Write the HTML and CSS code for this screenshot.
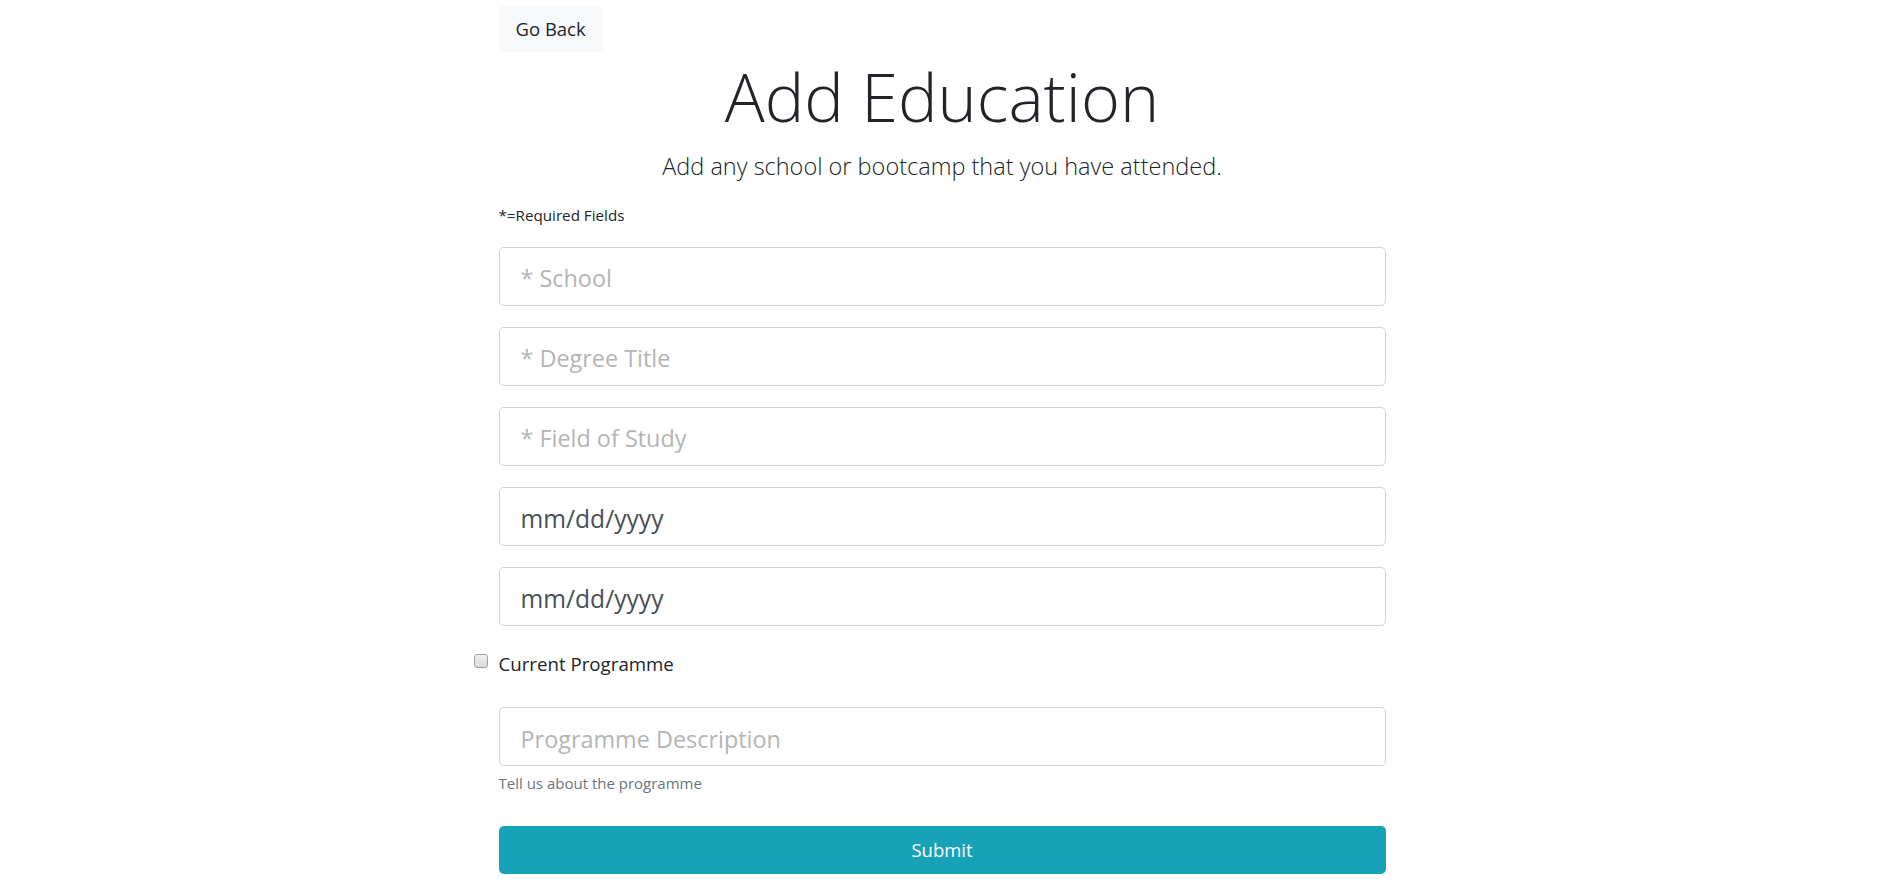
FILE: index.html
```html
<!DOCTYPE html>
<html lang="en">
<head>
<meta charset="utf-8">
<title>Add Education</title>
<link rel="stylesheet" href="styles.css">
</head>
<body>
<div class="container">
  <a class="btn-back" href="#">Go Back</a>
  <h1 class="title">Add Education</h1>
  <p class="lead">Add any school or bootcamp that you have attended.</p>
  <small class="required">*=Required Fields</small>
  <form class="form">
    <input class="field" type="text" placeholder="* School">
    <input class="field" type="text" placeholder="* Degree Title">
    <input class="field" type="text" placeholder="* Field of Study">
    <input class="field date" type="text" value="mm/dd/yyyy">
    <input class="field date" type="text" value="mm/dd/yyyy">
    <label class="check-row">
      <input class="check" type="checkbox">
      <span>Current Programme</span>
    </label>
    <input class="field desc" type="text" placeholder="Programme Description">
    <small class="help">Tell us about the programme</small>
    <button class="submit" type="button">Submit</button>
  </form>
</div>
</body>
</html>
```

FILE: styles.css
```css
* { box-sizing: border-box; }

body {
  margin: 0;
  background: #fff;
  color: #212529;
  font-family: "Open Sans", "Noto Sans", sans-serif;
  font-size: 18.5px;
  line-height: 1.5;
}

.container {
  width: 887px;
  margin: 0 auto;
  display: flex;
  flex-direction: column;
  align-items: stretch;
}

.btn-back {
  align-self: flex-start;
  margin-top: 6px;
  height: 46px;
  padding: 0 17px;
  display: flex;
  align-items: center;
  background: #f8f9fa;
  border-radius: 5px;
  color: #212529;
  text-decoration: none;
  font-size: 18.5px;
}

.title {
  margin: 3px 0 0;
  text-align: center;
  font-size: 66.5px;
  font-weight: 300;
  line-height: 82px;
  color: #212529;
}

.lead {
  margin: 12px 0 0;
  text-align: center;
  font-size: 23.5px;
  font-weight: 300;
  line-height: 34.5px;
}

.required {
  margin-top: 21px;
  font-size: 15.2px;
  line-height: 21px;
  color: #212529;
}

.form {
  margin-top: 21px;
  display: flex;
  flex-direction: column;
}

.field {
  height: 59px;
  margin: 0 0 21px;
  padding: 4px 21px 0;
  border: 1px solid #ced4da;
  border-radius: 5px;
  font-family: inherit;
  font-size: 23.4px;
  color: #495057;
  background: #fff;
  outline: none;
}

.field::placeholder { color: #b5b5b5; opacity: 1; }

.field.date { color: #495057; font-size: 24.6px; }

.check-row {
  margin: 3px 0 30px -25px;
  display: flex;
  align-items: flex-start;
  gap: 11px;
  font-size: 18.7px;
  line-height: 27.75px;
  color: #212529;
}

.check {
  appearance: none;
  -webkit-appearance: none;
  width: 14px;
  height: 14px;
  margin: 4px 0 0;
  border: 1px solid #a0a0a0;
  border-radius: 3px;
  background: linear-gradient(#f0f0f0, #dadada);
}

.field.desc { margin-bottom: 6px; }

.help {
  font-size: 15px;
  line-height: 23.25px;
  color: #6c757d;
}

.submit {
  margin-top: 30px;
  height: 48px;
  border: none;
  border-radius: 5px;
  background: #17a2b8;
  color: #fff;
  font-family: inherit;
  font-size: 18.5px;
}
```
